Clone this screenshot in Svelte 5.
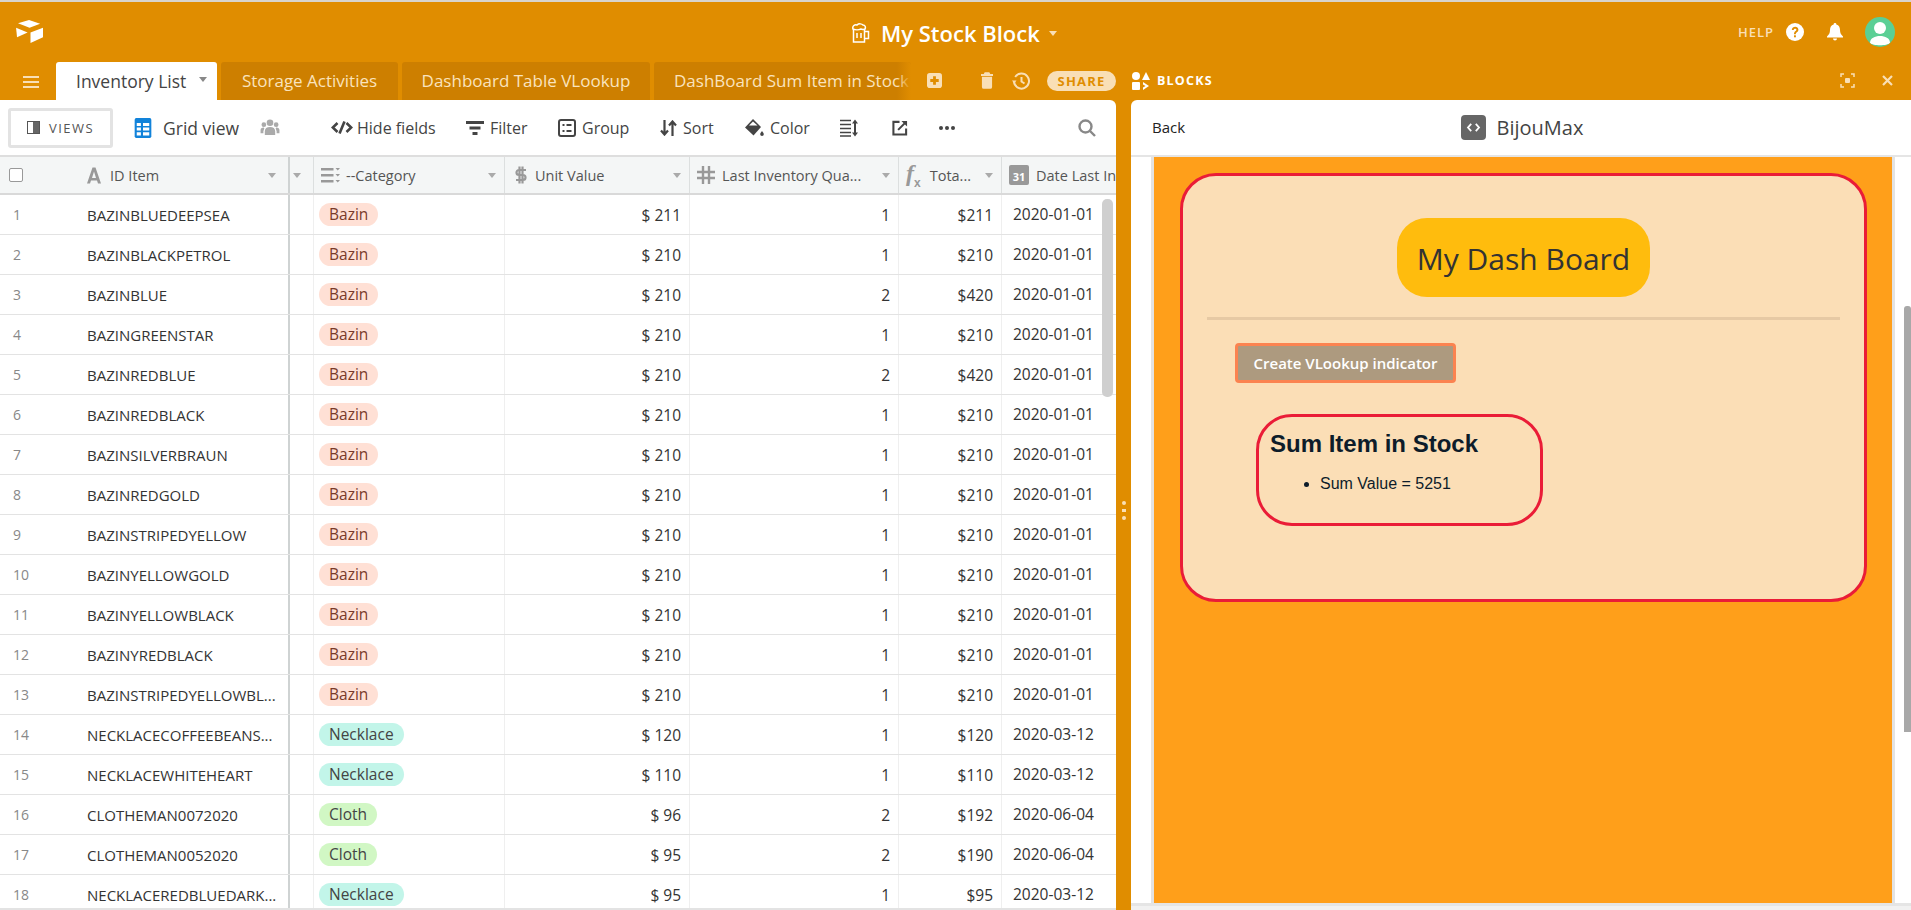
<script>
    const tabs = ["Storage Activities", "Dashboard Table VLookup"];

    const items = [
        ["BAZINBLUEDEEPSEA", "Bazin", 211, 1, 211, "2020-01-01"],
        ["BAZINBLACKPETROL", "Bazin", 210, 1, 210, "2020-01-01"],
        ["BAZINBLUE", "Bazin", 210, 2, 420, "2020-01-01"],
        ["BAZINGREENSTAR", "Bazin", 210, 1, 210, "2020-01-01"],
        ["BAZINREDBLUE", "Bazin", 210, 2, 420, "2020-01-01"],
        ["BAZINREDBLACK", "Bazin", 210, 1, 210, "2020-01-01"],
        ["BAZINSILVERBRAUN", "Bazin", 210, 1, 210, "2020-01-01"],
        ["BAZINREDGOLD", "Bazin", 210, 1, 210, "2020-01-01"],
        ["BAZINSTRIPEDYELLOW", "Bazin", 210, 1, 210, "2020-01-01"],
        ["BAZINYELLOWGOLD", "Bazin", 210, 1, 210, "2020-01-01"],
        ["BAZINYELLOWBLACK", "Bazin", 210, 1, 210, "2020-01-01"],
        ["BAZINYREDBLACK", "Bazin", 210, 1, 210, "2020-01-01"],
        ["BAZINSTRIPEDYELLOWBL...", "Bazin", 210, 1, 210, "2020-01-01"],
        ["NECKLACECOFFEEBEANS...", "Necklace", 120, 1, 120, "2020-03-12"],
        ["NECKLACEWHITEHEART", "Necklace", 110, 1, 110, "2020-03-12"],
        ["CLOTHEMAN0072020", "Cloth", 96, 2, 192, "2020-06-04"],
        ["CLOTHEMAN0052020", "Cloth", 95, 2, 190, "2020-06-04"],
        ["NECKLACEREDBLUEDARK...", "Necklace", 95, 1, 95, "2020-03-12"],
    ];
</script>

<div class="page">
    <header class="topbar">
        <svg class="logo" viewBox="0 0 30 26" fill="#fff">
            <polygon points="2,3.5 13.500,0 25,4 14,8" />
            <polygon points="0,8 12,13 1,18" />
            <polygon points="15,13 28,8 28,18 15,24" />
        </svg>
        <div class="title">
            <svg class="mug" viewBox="0 0 20 20" fill="none" stroke="#fff" stroke-width="1.500">
                <path d="M2.500 6v13h11V6" />
                <path d="M13.500 8.500h4v7h-4" />
                <path d="M2 6c-1-3 2-5 4-4 2-2 5-1 6 0 2 0 3 2 2 4-2 1-3 0-4 0-2 1-6 1-8 0z" />
                <path d="M6 10v5M10 10v5" />
            </svg>
            <span>My Stock Block</span>
            <i class="caret white"></i>
        </div>
        <div class="account">
            <span class="help">HELP</span>
            <svg class="ic-help" viewBox="0 0 18 18">
                <circle cx="9" cy="9" r="9" fill="#fff" />
                <path d="M5.800 7c.2-4.200 6.600-4.200 6.600-.2 0 2.400-2.600 2.400-2.600 4.400H8c0-3 2.400-3 2.400-4.400 0-1.400-2.600-1.400-2.700.2z" fill="#e08d00" />
                <rect x="8" y="12.300" width="1.900" height="2" fill="#e08d00" />
            </svg>
            <svg class="ic-bell" viewBox="0 0 16 18" fill="#fff">
                <path d="M8 0a1.300 1.300 0 0 1 1.300 1.500C12 2.300 13 4.500 13 7c0 3 1 4.500 3 6.500v1H0v-1C2 11.500 3 10 3 7c0-2.500 1-4.700 3.700-5.500A1.300 1.300 0 0 1 8 0z" />
                <path d="M6 15.500h4a2 2 0 0 1-4 0z" />
            </svg>
            <div class="avatar">
                <svg viewBox="0 0 30 30" fill="#fff">
                    <circle cx="15" cy="11" r="6" />
                    <path d="M5 26c0-5 5-7 10-7s10 2 10 7c-3 3-17 3-20 0z" />
                </svg>
            </div>
        </div>
    </header>

    <div class="tabbar">
        <div class="burger"><span></span><span></span><span></span></div>
        <div class="tab active">Inventory List <i class="caret"></i></div>
        {#each tabs as tab}
            <div class="tab">{tab}</div>
        {/each}
        <div class="tab last">DashBoard Sum Item in Stock</div>
        <svg class="ic-add" viewBox="0 0 16 16">
            <rect width="16" height="16" rx="3" fill="#f9dfb6" />
            <path d="M6.500 3.500h3v3h3v3h-3v3h-3v-3h-3v-3h3z" fill="#e08d00" />
        </svg>
        <svg class="ic-trash" viewBox="0 0 13 18" fill="#f9dfb6">
            <path d="M4 0h5l1 2h3v2H0V2h3zM1 5h11v11a2 2 0 0 1-2 2H3a2 2 0 0 1-2-2z" />
        </svg>
        <svg class="ic-history" viewBox="0 0 18 18" fill="none" stroke="#f9dfb6" stroke-width="2">
            <path d="M3.200 5A7.500 7.500 0 1 1 2 9.500" />
            <path d="M0 8.500h4.500L2.200 11.500z" fill="#f9dfb6" stroke="none" />
            <path d="M9.500 5v4.500l3 2" />
        </svg>
        <div class="share">SHARE</div>
        <svg class="ic-blocks" viewBox="0 0 18 18" fill="#fff">
            <circle cx="4" cy="4" r="4" />
            <polygon points="14,0 18,8 10,8" />
            <rect x="0" y="10" width="8" height="8" rx="1" />
            <path d="M11 10l6 4-6 4v-2.500l2.500-1.500L11 12.500z" />
        </svg>
        <span class="blocks">BLOCKS</span>
        <svg class="ic-full" viewBox="0 0 15 15" fill="none" stroke="#f9dfb6" stroke-width="1.500">
            <path d="M1 4V1h3M11 1h3v3M14 11v3h-3M4 14H1v-3" />
            <rect x="5" y="5" width="5" height="5" rx="1" fill="#f9dfb6" stroke="none" />
        </svg>
        <svg class="ic-close" viewBox="0 0 11 11" stroke="#f9dfb6" stroke-width="2.200">
            <path d="M1 1l9 9M10 1l-9 9" />
        </svg>
    </div>

    <main class="workspace">
        <section class="table-panel">
            <div class="toolbar">
                <button class="views">
                    <span class="views-ic"><b></b></span>
                    VIEWS
                </button>
                <svg class="ic-grid" viewBox="0 0 20 24">
                    <rect width="20" height="24" rx="2" fill="#1283da" />
                    <path d="M2.500 6h5v3.500h-5zM10 6h7.500v3.500H10zM2.500 11.500h5V15h-5zM10 11.500h7.500V15H10zM2.500 17h5v4h-5zM10 17h7.500v4H10z" fill="#fff" />
                </svg>
                <span class="view-name">Grid view</span>
                <svg class="ic-people" viewBox="0 0 20 18" fill="#aaa">
                    <circle cx="10" cy="4" r="3.500" />
                    <circle cx="3.500" cy="6" r="2.500" />
                    <circle cx="16.500" cy="6" r="2.500" />
                    <path d="M4.500 17v-4c0-3 2-4.500 5.500-4.500s5.500 1.500 5.500 4.500v4zM0 15v-3c0-2 1-3 3.500-3l.5 1-1 3v2zM20 15v-3c0-2-1-3-3.500-3l-.5 1 1 3v2z" />
                </svg>
                <div class="tool hide">
                    <svg viewBox="0 0 22 14" fill="none" stroke="#444" stroke-width="2.600">
                        <path d="M6.500 2.500 1.800 7l4.700 4.500M15.500 2.500 20.200 7l-4.700 4.500" />
                        <path d="M13.500 1 8.500 13" />
                    </svg>
                    Hide fields
                </div>
                <div class="tool filter">
                    <svg viewBox="0 0 18 14" fill="#444"><path d="M0 0h18v3H0zM3.500 5.500h11v3h-11zM6.500 11h5v3h-5z" /></svg>
                    Filter
                </div>
                <div class="tool group">
                    <svg viewBox="0 0 18 18" fill="none" stroke="#444" stroke-width="2">
                        <rect x="1" y="1" width="16" height="16" rx="2" />
                        <path d="M4.500 6h2M8.500 6h5M4.500 12h2M8.500 12h5" />
                    </svg>
                    Group
                </div>
                <div class="tool sort">
                    <svg viewBox="0 0 17 16" fill="none" stroke="#444" stroke-width="2.200">
                        <path d="M4.500 0v14M1 10.500l3.500 4 3.500-4" />
                        <path d="M12.500 16V2M9 5.500l3.500-4 3.500 4" />
                    </svg>
                    Sort
                </div>
                <div class="tool color">
                    <svg viewBox="0 0 19 18" fill="#444">
                        <path d="M8 0l1.500 1.500L16 8l-7.500 8.500L0 8.500z" />
                        <path d="M17 12c1 1.500 1.800 2.300 1.800 3.300a1.800 1.800 0 0 1-3.600 0c0-1 .8-1.800 1.800-3.300z" />
                        <path d="M4 6.500h8.500L8 2.500z" fill="#fff" />
                    </svg>
                    Color
                </div>
                <svg class="ic-height" viewBox="0 0 18 18" fill="none" stroke="#444" stroke-width="1.600">
                    <path d="M0 1.500h11M0 5.500h11M0 9.500h11M0 13.500h11M0 17h11" />
                    <path d="M15 2v14" stroke-width="2" />
                    <path d="M12 4.500 15 .5l3 4zM12 13.500l3 4 3-4z" fill="#444" stroke="none" />
                </svg>
                <svg class="ic-open" viewBox="0 0 17 17" fill="none" stroke="#444" stroke-width="2.200">
                    <path d="M8 2H1.500v13.500H15V9" />
                    <path d="M6.500 10.500 15 2" />
                    <path d="M10 1h6v6z" fill="#444" stroke="none" />
                </svg>
                <div class="dots"><i></i><i></i><i></i></div>
                <svg class="ic-search" viewBox="0 0 18 18" fill="none" stroke="#888" stroke-width="2.400">
                    <circle cx="7.500" cy="7.500" r="6" />
                    <path d="M12 12l5 5" />
                </svg>
            </div>

            <div class="grid">
                <div class="row head">
                    <div class="cell c-id">
                        <span class="check"></span>
                        <svg class="h-ic ic-a" viewBox="0 0 14 16" fill="#999"><path d="M5.500 0h3L14 16h-3l-1-3H4l-1 3H0zM7 4 5 10.500h4z" /></svg>
                        <span class="h-label">ID Item</span>
                        <i class="caret gray id-caret"></i>
                    </div>
                    <div class="cell c-gap"><i class="caret gray"></i></div>
                    <div class="cell c-cat">
                        <svg class="h-ic ic-cat" viewBox="0 0 19 17" fill="#999"><path d="M0 1h12.500v2.500H0zM0 7h12.500v2.500H0zM0 13h12.500v2.500H0zM14.500 1H19l-2.250 2.500zM14.500 7H19l-2.250 2.500zM14.500 13H19l-2.250 2.500z" /></svg>
                        <span class="h-label">--Category</span>
                        <i class="caret gray"></i>
                    </div>
                    <div class="cell c-unit">
                        <svg class="h-ic ic-dollar" viewBox="0 0 13 20" fill="none" stroke="#999" stroke-width="2.200"><path d="M11.500 5H4.500a2.500 2.500 0 0 0 0 5h4a2.500 2.500 0 0 1 0 5H1.500M5 1.500v17M8 1.500v17" /></svg>
                        <span class="h-label">Unit Value</span>
                        <i class="caret gray"></i>
                    </div>
                    <div class="cell c-qty">
                        <svg class="h-ic ic-hash" viewBox="0 0 18 18" fill="none" stroke="#999" stroke-width="2.400"><path d="M6 0v18M12 0v18M0 6h18M0 12h18" /></svg>
                        <span class="h-label">Last Inventory Qua...</span>
                        <i class="caret gray"></i>
                    </div>
                    <div class="cell c-total">
                        <span class="fx">f<sub>x</sub></span>
                        <span class="h-label">Tota...</span>
                        <i class="caret gray"></i>
                    </div>
                    <div class="cell c-date">
                        <span class="cal">31</span>
                        <span class="h-label">Date Last In</span>
                    </div>
                </div>

                <div class="rows">
                    {#each items as item, i}
                        <div class="row">
                            <div class="cell c-id">
                                <span class="num">{i + 1}</span>
                                <span class="name">{item[0]}</span>
                            </div>
                            <div class="cell c-gap"></div>
                            <div class="cell c-cat">
                                <span class="pill {item[1].toLowerCase()}">{item[1]}</span>
                            </div>
                            <div class="cell c-unit right">$ {item[2]}</div>
                            <div class="cell c-qty right">{item[3]}</div>
                            <div class="cell c-total right">${item[4]}</div>
                            <div class="cell c-date date">{item[5]}</div>
                        </div>
                    {/each}
                </div>
                <div class="grid-scroll"></div>
            </div>
        </section>

        <div class="handle"><i></i><i class="mid"></i><i></i></div>

        <section class="block-panel">
            <div class="block-bar">
                <span class="back">Back</span>
                <div class="block-name">
                    <span class="code-ic">
                        <svg viewBox="0 0 16 12" fill="none" stroke="#fff" stroke-width="2"><path d="M5.500 2 2 6l3.500 4M10.500 2 14 6l-3.500 4" /></svg>
                    </span>
                    BijouMax
                </div>
            </div>
            <div class="block-body">
                <div class="frame">
                    <div class="board">
                        <div class="board-title">My Dash Board</div>
                        <hr />
                        <button class="create">Create VLookup indicator</button>
                        <div class="indicator">
                            <h2>Sum Item in Stock</h2>
                            <ul><li>Sum Value = 5251</li></ul>
                        </div>
                    </div>
                </div>
                <div class="page-scroll"></div>
            </div>
            <div class="block-foot"></div>
        </section>
    </main>
</div>

<style>
    :global(body) {
        margin: 0;
        background: #e08d00;
        font-family: "Open Sans", "Noto Sans", sans-serif;
    }

    .page {
        width: 1911px;
        height: 910px;
        display: flex;
        flex-direction: column;
        overflow: hidden;
        background: #e08d00;
    }

    .topbar {
        position: relative;
        height: 60px;
        flex: none;
        border-top: 2px solid #d8d4cc;
        box-sizing: content-box;
        display: flex;
        align-items: center;
    }

    .logo {
        position: absolute;
        left: 16px;
        top: 18px;
        width: 29px;
        height: 25px;
    }

    .title {
        position: absolute;
        left: 851px;
        top: 16px;
        display: flex;
        align-items: center;
        color: #fff;
        font-size: 22px;
        font-weight: 600;
    }

    .mug {
        width: 20px;
        height: 20px;
        margin-right: 10px;
    }

    .title .caret {
        margin-left: 9px;
    }

    .account {
        position: absolute;
        right: 16px;
        top: 15px;
        display: flex;
        align-items: center;
    }

    .help {
        color: #f9dfb6;
        font-size: 13px;
        font-weight: 600;
        letter-spacing: 1px;
        margin-right: 12px;
    }

    .ic-help {
        width: 18px;
        height: 18px;
        margin-right: 23px;
    }

    .ic-bell {
        width: 16px;
        height: 18px;
        margin-right: 22px;
    }

    .avatar {
        width: 30px;
        height: 30px;
        border-radius: 50%;
        background: #5bcf95;
        overflow: hidden;
    }

    .avatar svg {
        display: block;
        width: 30px;
        height: 30px;
    }

    .tabbar {
        height: 38px;
        flex: none;
        display: flex;
        align-items: stretch;
        position: relative;
    }

    .burger {
        width: 16px;
        margin: 14px 17px 0 23px;
        display: flex;
        flex-direction: column;
        gap: 3px;
    }

    .burger span {
        height: 2px;
        background: #f9dfb6;
    }

    .tab {
        position: relative;
        height: 38px;
        box-sizing: border-box;
        margin-right: 4px;
        width: 177px;
        padding-top: 9px;
        text-align: center;
        font-size: 17px;
        line-height: 20px;
        white-space: nowrap;
        background: #cd7f00;
        color: #fae3bd;
        border-radius: 3px 3px 0 0;
    }

    .tab:nth-child(4) {
        width: 248px;
    }

    .tab.active {
        width: 161px;
        background: #fff;
        color: #444;
        text-align: left;
        padding-left: 20px;
        font-size: 17.500px;
    }

    .tab.active .caret {
        position: absolute;
        left: 143px;
        top: 15px;
        border-top-color: #888;
    }

    .tab.last {
        width: 257px;
        margin-right: 0;
        padding-left: 20px;
        text-align: left;
        overflow: hidden;
    }

    .tab.last::after {
        content: "";
        position: absolute;
        right: 0;
        top: 0;
        bottom: 0;
        width: 14px;
        background: linear-gradient(to right, rgba(224, 141, 0, 0), #e08d00);
    }

    .ic-add {
        width: 15px;
        height: 15px;
        margin: 11px 0 0 16px;
    }

    .ic-trash {
        width: 12px;
        height: 17px;
        margin: 10px 0 0 39px;
    }

    .ic-history {
        width: 18px;
        height: 18px;
        margin: 10px 0 0 19px;
    }

    .share {
        width: 69px;
        height: 20px;
        margin: 9px 0 0 17px;
        border-radius: 10px;
        background: #f9dfb6;
        color: #e08d00;
        font-size: 13px;
        font-weight: 700;
        letter-spacing: 1.200px;
        line-height: 20px;
        text-align: center;
    }

    .ic-blocks {
        width: 18px;
        height: 18px;
        margin: 10px 0 0 16px;
    }

    .blocks {
        margin: 10px 0 0 7px;
        color: #fff;
        font-size: 12.500px;
        font-weight: 700;
        letter-spacing: 1.200px;
        line-height: 18px;
    }

    .ic-full {
        width: 15px;
        height: 15px;
        margin: 11px 0 0 auto;
    }

    .ic-close {
        width: 11px;
        height: 11px;
        margin: 13px 18px 0 27px;
    }

    .caret {
        display: inline-block;
        width: 0;
        height: 0;
        border-left: 4px solid transparent;
        border-right: 4px solid transparent;
        border-top: 5px solid #aaa;
    }

    .caret.white {
        border-top-color: #f9dfb6;
    }

    .workspace {
        flex: 1;
        min-height: 0;
        display: flex;
    }

    .table-panel {
        width: 1116px;
        flex: none;
        background: #fff;
        border-radius: 0 6px 0 0;
        overflow: hidden;
        display: flex;
        flex-direction: column;
    }

    .toolbar {
        height: 55px;
        flex: none;
        border-bottom: 2px solid #dedede;
        display: flex;
        align-items: center;
        color: #444;
        font-size: 16px;
    }

    .views {
        width: 105px;
        height: 40px;
        margin-left: 8px;
        box-sizing: border-box;
        background: #fff;
        border: 3px solid #e3e3e3;
        border-radius: 3px;
        display: flex;
        align-items: center;
        justify-content: center;
        gap: 9px;
        color: #555;
        font-family: inherit;
        font-size: 13px;
        font-weight: 500;
        letter-spacing: 1.500px;
    }

    .views-ic {
        width: 13px;
        height: 13px;
        box-sizing: border-box;
        border: 1px solid #555;
        display: flex;
        justify-content: flex-end;
    }

    .views-ic b {
        width: 6px;
        background: #666;
    }

    .ic-grid {
        width: 20px;
        height: 20px;
        margin-left: 20px;
    }

    .view-name {
        margin-left: 10px;
        font-size: 17.500px;
        width: 77px;
        white-space: nowrap;
    }

    .ic-people {
        width: 20px;
        height: 17px;
        margin-left: 20px;
    }

    .tool {
        display: flex;
        align-items: center;
        gap: 6px;
        white-space: nowrap;
        flex: none;
    }

    .tool.hide { margin-left: 51px; width: 135px; gap: 4px; }
    .tool.filter { width: 92px; }
    .tool.group { width: 102px; }
    .tool.sort { width: 85px; }
    .tool.color { width: 95px; }

    .hide svg { width: 22px; height: 15px; }
    .filter svg { width: 18px; height: 14px; }
    .group svg { width: 18px; height: 18px; }
    .sort svg { width: 17px; height: 16px; }
    .color svg { width: 19px; height: 18px; }

    .ic-height {
        width: 18px;
        height: 18px;
    }

    .ic-open {
        width: 16px;
        height: 16px;
        margin-left: 34px;
    }

    .dots {
        display: flex;
        gap: 2px;
        margin-left: 31px;
    }

    .dots i {
        width: 4px;
        height: 4px;
        border-radius: 50%;
        background: #444;
    }

    .ic-search {
        width: 18px;
        height: 18px;
        margin-left: 123px;
    }

    .grid {
        position: relative;
        flex: 1;
        min-height: 0;
        display: flex;
        flex-direction: column;
        font-size: 15.500px;
        color: #333;
    }

    .row {
        display: flex;
        height: 40px;
        box-sizing: border-box;
        border-bottom: 1px solid #e3e3e3;
    }

    .row.head {
        height: 38px;
        flex: none;
        background: #f4f6f6;
        border-bottom: 2px solid #d9d9d9;
        color: #555;
        font-size: 14.500px;
    }

    .rows {
        height: 713px;
        flex: none;
        overflow: hidden;
        border-bottom: 2px solid #e3e3e3;
    }

    .cell {
        height: 100%;
        box-sizing: border-box;
        display: flex;
        align-items: center;
        border-right: 1px solid #efefef;
        white-space: nowrap;
        overflow: hidden;
    }

    .head .cell {
        border-right-color: #dcdfdf;
        padding: 0 8px 0 7px;
    }

    .head .cell .caret {
        margin-left: auto;
    }

    .c-id {
        width: 290px;
        border-right: 2px solid #cfd3d3 !important;
        flex: none;
    }

    .c-gap {
        width: 24px;
        flex: none;
    }

    .head .c-gap {
        padding: 0 0 0 3px;
    }

    .head .c-gap .caret {
        margin: 0;
    }

    .c-cat { width: 191px; flex: none; }
    .c-unit { width: 185px; flex: none; }
    .c-qty { width: 209px; flex: none; }
    .c-total { width: 103px; flex: none; }
    .c-date { width: 114px; flex: none; border-right: none; }

    .right {
        justify-content: flex-end;
        padding-right: 8px;
    }

    .date {
        padding-left: 11px;
        padding-bottom: 2px;
    }

    .check {
        width: 14px;
        height: 14px;
        box-sizing: border-box;
        border: 1px solid #999;
        border-radius: 2px;
        background: #fff;
        margin: 0 0 0 2px;
    }

    .h-ic {
        width: 16px;
        height: 17px;
        flex: none;
    }

    .ic-a {
        width: 14px;
        margin-left: 64px;
    }

    .ic-cat {
        width: 19px;
    }

    .ic-cat + .h-label {
        margin-left: 6px;
    }

    .ic-dollar {
        width: 14px;
        height: 20px;
        margin-left: 2px;
    }

    .ic-dollar + .h-label {
        margin-left: 7px;
    }

    .ic-hash {
        width: 18px;
        height: 18px;
    }

    .ic-hash + .h-label {
        margin-left: 7px;
    }

    .h-label {
        margin-left: 9px;
    }

    .head .c-id {
        padding-right: 12px;
    }

    .fx {
        font-family: "Liberation Serif", serif;
        font-style: italic;
        font-weight: 700;
        font-size: 24px;
        color: #999;
        line-height: 1;
    }

    .fx sub {
        font-family: "Liberation Sans", sans-serif;
        font-size: 12px;
        font-style: normal;
        font-weight: 700;
    }

    .cal {
        width: 20px;
        height: 20px;
        flex: none;
        box-sizing: border-box;
        border-top: 4px solid #999;
        border-radius: 2px;
        background: #999;
        color: #fff;
        font-size: 11px;
        font-weight: 700;
        line-height: 15px;
        text-align: center;
    }

    .head .c-date {
        padding-right: 0;
        padding-left: 7px;
    }

    .cal + .h-label {
        margin-left: 7px;
    }

    .num {
        width: 87px;
        padding-left: 13px;
        box-sizing: border-box;
        font-size: 14px;
        color: #888;
        flex: none;
    }

    .name {
        font-size: 15px;
    }

    .pill {
        margin-left: 5px;
        height: 23px;
        padding: 0 10px;
        border-radius: 12px;
        line-height: 23px;
        color: #444;
    }

    .pill.bazin {
        background: #ffe0d5;
        color: #7a3b2a;
    }

    .pill.necklace {
        background: #c2f5e9;
    }

    .pill.cloth {
        background: #d1f7c4;
    }

    .grid-scroll {
        position: absolute;
        left: 1102px;
        top: 42px;
        width: 11px;
        height: 198px;
        border-radius: 5px;
        background: #cfcfcf;
    }

    .handle {
        width: 15px;
        flex: none;
        display: flex;
        flex-direction: column;
        align-items: center;
        gap: 4px;
        padding-top: 401px;
    }

    .handle i {
        width: 4px;
        height: 4px;
        border-radius: 50%;
        background: #f9dfb6;
    }

    .handle i.mid {
        border-radius: 0;
        height: 3px;
    }

    .block-panel {
        flex: 1;
        min-width: 0;
        background: #fff;
        border-radius: 6px 0 0 0;
        display: flex;
        flex-direction: column;
    }

    .block-bar {
        position: relative;
        height: 57px;
        flex: none;
        box-sizing: border-box;
        border-bottom: 2px solid #e5e5e5;
        display: flex;
        align-items: center;
        justify-content: center;
    }

    .back {
        position: absolute;
        left: 21px;
        top: 17px;
        font-size: 15px;
        font-weight: 500;
        color: #222;
    }

    .block-name {
        display: flex;
        align-items: center;
        gap: 11px;
        margin-left: 2px;
        font-size: 20px;
        color: #444;
    }

    .code-ic {
        width: 25px;
        height: 25px;
        border-radius: 4px;
        background: #666;
        display: flex;
        align-items: center;
        justify-content: center;
    }

    .code-ic svg {
        width: 15px;
        height: 11px;
    }

    .block-body {
        position: relative;
        flex: 1;
        min-height: 0;
        display: flex;
        padding: 0 16px 0 20px;
    }

    .frame {
        padding: 16px 25px 0 26px;
        width: 687px;
        height: 730px;
        background: #ff9f1a;
        border: solid #e3e3e3;
        border-width: 0 3px;
    }

    .board {
        height: 429px;
        box-sizing: border-box;
        border: 3px solid #ea1c37;
        border-radius: 36px;
        background: #fbdeb6;
        padding: 42px 24px 0;
        display: flex;
        flex-direction: column;
        align-items: flex-start;
    }

    .board-title {
        align-self: center;
        height: 79px;
        width: 253px;
        border-radius: 30px;
        background: #ffbc0d;
        color: #333;
        font-size: 30px;
        font-weight: 500;
        line-height: 81px;
        text-align: center;
    }

    hr {
        align-self: stretch;
        margin: 20px 0 0;
        height: 3px;
        border: none;
        background: #e6c9a4;
    }

    .create {
        width: 221px;
        height: 40px;
        margin: 23px 0 0 28px;
        box-sizing: border-box;
        border: 3px solid #fb8350;
        border-radius: 4px;
        background: #ad9a7f;
        color: #fff;
        font-family: inherit;
        font-size: 15px;
        font-weight: 600;
        padding: 0;
    }

    .indicator {
        width: 287px;
        height: 112px;
        margin: 31px 0 0 49px;
        box-sizing: border-box;
        border: 3px solid #ea1c37;
        border-radius: 36px;
        padding: 13px 11px 0;
        font-family: "Liberation Sans", Arial, sans-serif;
        color: #0d1c2a;
    }

    h2 {
        margin: 0;
        font-size: 24px;
        line-height: 28px;
        font-weight: 700;
    }

    ul {
        margin: 16px 0 0;
        padding-left: 50px;
        font-size: 16px;
        line-height: 20px;
    }

    .page-scroll {
        position: absolute;
        right: 0;
        top: 149px;
        width: 7px;
        height: 426px;
        border-radius: 3px 3px 0 0;
        background: #a8a8a8;
    }

    .block-foot {
        height: 7px;
        flex: none;
        background: #f1f1f1;
        border-top: 3px solid #e5e5e5;
        box-sizing: border-box;
    }
</style>
